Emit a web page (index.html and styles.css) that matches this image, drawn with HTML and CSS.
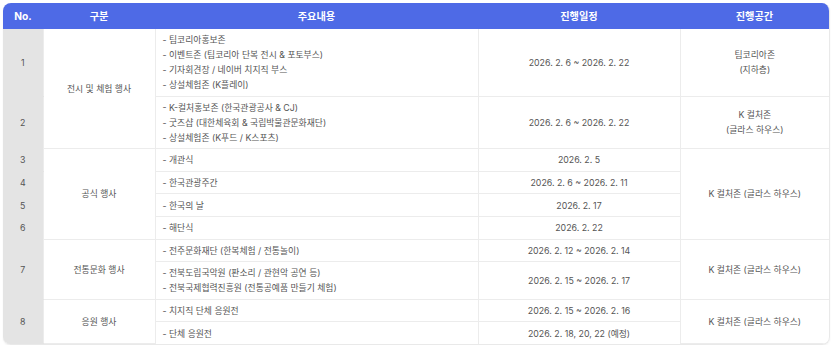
FILE: index.html
```html
<!DOCTYPE html>
<html lang="ko">
<head>
<meta charset="utf-8">
<link rel="stylesheet" href="styles.css">
</head>
<body>
<div class="wrap">
<table class="sched">
  <colgroup>
    <col class="c-no"><col class="c-cat"><col class="c-main"><col class="c-date"><col class="c-place">
  </colgroup>
  <thead>
    <tr><th>No.</th><th>구분</th><th>주요내용</th><th>진행일정</th><th>진행공간</th></tr>
  </thead>
  <tbody>
    <tr>
      <td class="no">1</td>
      <td rowspan="2">전시 및 체험 행사</td>
      <td class="main">- 팀코리아홍보존<br>- 이벤트존 (팀코리아 단복 전시 &amp; 포토부스)<br>- 기자회견장 / 네이버 치지직 부스<br>- 상설체험존 (K플레이)</td>
      <td>2026. 2. 6 ~ 2026. 2. 22</td>
      <td>팀코리아존<br>(지하층)</td>
    </tr>
    <tr>
      <td class="no">2</td>
      <td class="main">- K-컬처홍보존 (한국관광공사 &amp; CJ)<br>- 굿즈샵 (대한체육회 &amp; 국립박물관문화재단)<br>- 상설체험존 (K푸드 / K스포츠)</td>
      <td>2026. 2. 6 ~ 2026. 2. 22</td>
      <td>K 컬처존<br>(글라스 하우스)</td>
    </tr>
    <tr>
      <td class="no">3</td>
      <td rowspan="4">공식 행사</td>
      <td class="main">- 개관식</td>
      <td>2026. 2. 5</td>
      <td rowspan="4">K 컬처존 (글라스 하우스)</td>
    </tr>
    <tr>
      <td class="no">4</td>
      <td class="main">- 한국관광주간</td>
      <td>2026. 2. 6 ~ 2026. 2. 11</td>
    </tr>
    <tr>
      <td class="no">5</td>
      <td class="main">- 한국의 날</td>
      <td>2026. 2. 17</td>
    </tr>
    <tr>
      <td class="no">6</td>
      <td class="main">- 해단식</td>
      <td>2026. 2. 22</td>
    </tr>
    <tr>
      <td class="no" rowspan="2">7</td>
      <td rowspan="2">전통문화 행사</td>
      <td class="main">- 전주문화재단 (한복체험 / 전통놀이)</td>
      <td>2026. 2. 12 ~ 2026. 2. 14</td>
      <td rowspan="2">K 컬처존 (글라스 하우스)</td>
    </tr>
    <tr>
      <td class="main">- 전북도립국악원 (판소리 / 관현악 공연 등)<br>- 전북국제협력진흥원 (전통공예품 만들기 체험)</td>
      <td>2026. 2. 15 ~ 2026. 2. 17</td>
    </tr>
    <tr>
      <td class="no" rowspan="2">8</td>
      <td rowspan="2">응원 행사</td>
      <td class="main">- 치지직 단체 응원전</td>
      <td>2026. 2. 15 ~ 2026. 2. 16</td>
      <td rowspan="2">K 컬처존 (글라스 하우스)</td>
    </tr>
    <tr class="last">
      <td class="main">- 단체 응원전</td>
      <td>2026. 2. 18, 20, 22 (예정)</td>
    </tr>
  </tbody>
</table>
</div>
</body>
</html>
```

FILE: styles.css
```css
html, body {
  margin: 0;
  padding: 0;
  background: #ffffff;
}
body {
  font-family: Inter, "Noto Sans CJK KR", sans-serif;
  color: #555555;
}
.wrap {
  margin: 3px 5px 0 3px;
  border-radius: 8px;
  overflow: hidden;
  border-right: 1px solid #e9e9e9;
  border-bottom: 1px solid #e9e9e9;
  box-shadow: 0 1px 2px rgba(0,0,0,0.06);
}
.sched {
  width: 100%;
  border-collapse: collapse;
  table-layout: fixed;
  font-size: 8.8px;
  line-height: 15px;
}
.c-no { width: 40px; }
.c-cat { width: 112px; }
.c-main { width: 323px; }
.c-date { width: 202px; }
.c-place { width: auto; }
.sched th {
  background: #4e6ae6;
  color: #ffffff;
  font-weight: 700;
  font-size: 10.2px;
  height: 26px;
  padding: 0;
  text-align: center;
}
.sched td {
  padding: 3.3px 7px;
  text-align: center;
  vertical-align: middle;
  border-bottom: 1px solid #ececec;
  border-left: 1px solid #ececec;
}
.sched td.no {
  background: #e4e4e4;
  border-left: none;
  border-bottom-color: #e4e4e4;
}
.sched td.main {
  text-align: left;
}
.sched tr.last td {
  border-bottom: none;
}
```
